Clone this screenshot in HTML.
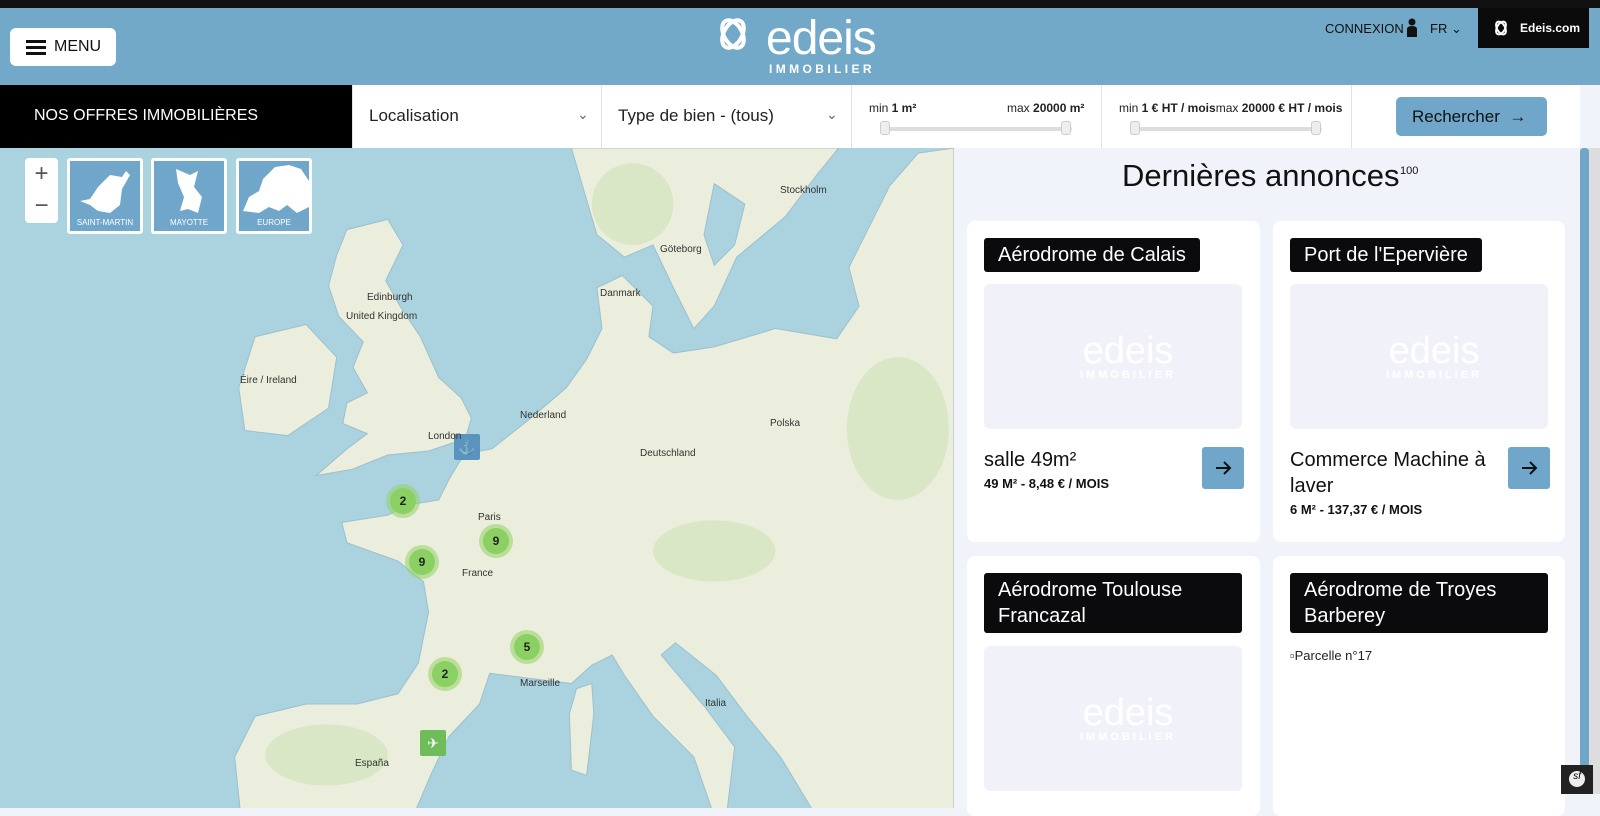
<!DOCTYPE html>
<html><head><meta charset="utf-8"><style>
*{box-sizing:border-box;margin:0;padding:0}
body{width:1600px;height:794px;overflow:hidden;font-family:"Liberation Sans",sans-serif;background:#f1f3fa;position:relative}
.abs{position:absolute}
#top{left:0;top:0;width:1600px;height:8px;background:#111}
#hdr{left:0;top:8px;width:1600px;height:77px;background:#72a8c8}
#menu{left:10px;top:28px;width:106px;height:38px;background:#fff;border-radius:6px;font-size:16px;display:flex;align-items:center;padding-left:16px;gap:8px;color:#111}
#bar{left:0;top:85px;width:1580px;height:63px;background:#fff}
.col{position:absolute;top:0;height:63px;border-left:1px solid #e3e3e3}
.lbl{font-size:17px;color:#222;position:absolute;top:21px}
.sl{position:absolute;top:42px;height:4px;background:#ddd;border-radius:2px}
.kn{position:absolute;top:36px;width:10px;height:14px;border:1px solid #ccc;border-radius:3px;background:#eee}
.small{font-size:12px;color:#222;position:absolute;top:16px}
#map{left:0;top:148px;width:954px;height:660px;overflow:hidden;background:#aad3df}
.cl{position:absolute;width:34px;height:34px;border-radius:50%;background:rgba(150,210,100,.55);display:flex;align-items:center;justify-content:center}
.cl b{width:26px;height:26px;border-radius:50%;background:#8bd063;font-size:12px;display:flex;align-items:center;justify-content:center;color:#222}
.ml{position:absolute;font-size:10px;color:#333}
.card{position:absolute;background:#fff;border-radius:8px}
.tag{position:absolute;left:17px;top:17px;background:#0b0b0d;color:#fff;font-size:20px;padding:4px 14px;border-radius:3px;line-height:26px}
.ph{position:absolute;left:17px;top:63px;width:258px;height:145px;background:#f1f2f9;border-radius:6px;display:flex;flex-direction:column;align-items:center;justify-content:center;color:#fff;padding-left:30px}
.ph .e{font-size:38px;line-height:36px}
.ph .i{font-size:11px;letter-spacing:3px;font-weight:bold}
.arr{position:absolute;left:235px;top:226px;width:42px;height:42px;background:#6fa6c9;border-radius:3px}
.t{position:absolute;left:17px;top:226px;font-size:20px;color:#111;width:210px;line-height:26px}
.s{font-size:13px;font-weight:bold;margin-top:2px;line-height:18px}
.sq{position:absolute;top:10px;width:76px;height:76px;background:#6fa6c9;border:3px solid #fff;border-radius:3px;color:#fff;font-size:8px;text-align:center;overflow:hidden}
.sq span{position:absolute;bottom:4px;left:0;right:0}
</style></head><body>
<div id="top" class="abs"></div>
<div id="hdr" class="abs">
 <div id="menu" class="abs" style="top:20px"><svg width="20" height="16"><rect y="1" width="20" height="3" fill="#111"/><rect y="7" width="20" height="3" fill="#111"/><rect y="13" width="20" height="3" fill="#111"/></svg>MENU</div>
 <svg class="abs" style="left:712px;top:9px" width="42" height="34" viewBox="0 0 42 34"><g fill="none" stroke="#fff" stroke-width="4"><ellipse cx="21" cy="17" rx="15" ry="9" transform="rotate(60 21 17)"/><ellipse cx="21" cy="17" rx="15" ry="9" transform="rotate(-60 21 17)"/></g></svg>
 <div class="abs" style="left:766px;top:6px;color:#fff;font-size:48px;line-height:50px;letter-spacing:-1px">edeis</div>
 <div class="abs" style="left:769px;top:54px;color:#fff;font-size:12px;letter-spacing:3.4px;font-weight:bold">IMMOBILIER</div>
 <div class="abs" style="left:1325px;top:13px;color:#111;font-size:13px">CONNEXION</div>
 <svg class="abs" style="left:1406px;top:10px" width="12" height="20"><circle cx="6" cy="4" r="3.5" fill="#111"/><path d="M1 19V11Q1 8 6 8Q11 8 11 11V19Z" fill="#111"/></svg>
 <div class="abs" style="left:1430px;top:13px;color:#111;font-size:13px">FR &#8964;</div>
 <div class="abs" style="left:1478px;top:0;width:111px;height:40px;background:#0b0b0b;color:#fff;font-size:12px;font-weight:bold;padding:13px 0 0 42px">Edeis.com
  <svg class="abs" style="left:14px;top:11px" width="18" height="18"><g fill="none" stroke="#fff" stroke-width="2"><ellipse cx="9" cy="9" rx="7" ry="4" transform="rotate(60 9 9)"/><ellipse cx="9" cy="9" rx="7" ry="4" transform="rotate(-60 9 9)"/></g></svg></div>
</div>
<div id="bar" class="abs">
 <div class="abs" style="left:0;top:0;width:352px;height:63px;background:#000;color:#fff;font-size:16px;padding:22px 0 0 34px">NOS OFFRES IMMOBILIÈRES</div>
 <div class="col" style="left:352px;width:249px"><span class="lbl" style="left:16px">Localisation</span><span class="lbl" style="left:224px;font-size:14px;color:#666">&#8964;</span></div>
 <div class="col" style="left:601px;width:250px"><span class="lbl" style="left:16px">Type de bien - (tous)</span><span class="lbl" style="left:224px;font-size:14px;color:#666">&#8964;</span></div>
 <div class="col" style="left:851px;width:250px"><span class="small" style="left:17px">min <b>1 m²</b></span><span class="small" style="left:155px">max <b>20000 m²</b></span><div class="sl" style="left:30px;width:190px"></div><div class="kn" style="left:28px"></div><div class="kn" style="left:209px"></div></div>
 <div class="col" style="left:1101px;width:250px"><span class="small" style="left:17px">min <b>1 € HT / mois</b>max <b>20000 € HT / mois</b></span><div class="sl" style="left:30px;width:190px"></div><div class="kn" style="left:28px"></div><div class="kn" style="left:209px"></div></div>
 <div class="col" style="left:1351px;width:229px"><div class="abs" style="left:44px;top:12px;width:151px;height:39px;background:#6fa6c9;border-radius:5px;font-size:17px;color:#111;padding:10px 0 0 16px">Rechercher &nbsp;&rarr;</div></div>
</div>
<div id="map" class="abs">
<svg width="954" height="660" viewBox="0 145 935 647" preserveAspectRatio="none" style="position:absolute;left:0;top:0">
<g fill="#eceedd" stroke="#9cc0cf" stroke-width="1">
<path d="M340 225L380 215L395 240L378 275L392 300L412 330L430 370L452 390L462 410L456 430L420 442L380 446L345 460L310 466L340 440L360 425L336 415L340 395L360 385L346 360L356 335L332 310L322 280L330 250Z"/>
<path d="M250 330L300 318L330 350L322 400L282 427L240 422L234 380Z"/>
<path d="M455 445L482 440L520 410L555 380L575 352L590 322L585 282L610 270L640 300L636 330L660 346L700 340L760 322L820 332L842 300L832 262L852 222L872 182L900 150L935 145L935 800L800 800L765 742L732 702L702 662L662 630L648 642L690 692L720 732L712 800L700 800L680 742L640 702L612 662L600 642L580 652L560 670L520 665L480 660L470 690L440 722L422 760L405 800L236 800L230 742L250 702L300 690L350 690L390 680L410 650L420 600L415 570L390 550L340 532L335 512L380 505L400 495L430 490L440 470Z"/>
<path d="M560 145L585 230L612 252L640 240L660 282L680 322L700 300L722 252L770 212L800 172L822 145Z"/>
<path d="M565 675L580 670L582 700L575 760L560 755L558 700Z"/>
<path d="M700 180L730 200L720 240L700 260L690 230Z" fill="#aad3df"/>
</g>
<g fill="#c8e0b0" opacity=".5"><ellipse cx="620" cy="200" rx="40" ry="40"/><ellipse cx="880" cy="420" rx="50" ry="70"/><ellipse cx="700" cy="540" rx="60" ry="30"/><ellipse cx="320" cy="740" rx="60" ry="30"/></g>
</svg>
<div class="abs" style="left:25px;top:10px;width:33px;height:65px;background:#fff;border-radius:4px;font-size:24px;color:#555;text-align:center;line-height:32px">+<br>−</div>
<div class="sq" style="left:67px"><svg width="70" height="60"><path d="M10 40L20 38L28 26L40 14L52 16L56 10L60 14L52 28L50 44L40 52L28 50L20 44Z" fill="#fff"/></svg><span>SAINT-MARTIN</span></div>
<div class="sq" style="left:151px"><svg width="70" height="60"><path d="M22 8L36 14L44 10L40 26L48 36L44 52L34 48L26 50L30 36L24 22Z" fill="#fff"/></svg><span>MAYOTTE</span></div>
<div class="sq" style="left:236px"><svg width="70" height="60"><path d="M4 50L10 36L20 30L24 18L36 6L50 4L62 8L70 20L70 46L58 52L48 44L40 50L30 46L20 52Z" fill="#fff"/></svg><span>EUROPE</span></div>
<div class="abs" style="left:454px;top:286px;width:26px;height:26px;background:#5b93bf;color:#fff;font-size:14px;text-align:center;line-height:26px;border-radius:2px">⚓</div>
<div class="abs" style="left:420px;top:582px;width:26px;height:26px;background:#6ebc5a;color:#fff;font-size:14px;text-align:center;line-height:26px;border-radius:2px">✈</div>
<div class="cl" style="left:386px;top:336px"><b>2</b></div>
<div class="cl" style="left:479px;top:376px"><b>9</b></div>
<div class="cl" style="left:405px;top:397px"><b>9</b></div>
<div class="cl" style="left:510px;top:482px"><b>5</b></div>
<div class="cl" style="left:428px;top:509px"><b>2</b></div>
<span class="ml" style="left:367px;top:144px">Edinburgh</span><span class="ml" style="left:346px;top:163px">United Kingdom</span><span class="ml" style="left:240px;top:227px">Éire / Ireland</span><span class="ml" style="left:428px;top:283px">London</span><span class="ml" style="left:478px;top:364px">Paris</span><span class="ml" style="left:462px;top:420px">France</span><span class="ml" style="left:520px;top:262px">Nederland</span><span class="ml" style="left:600px;top:140px">Danmark</span><span class="ml" style="left:640px;top:300px">Deutschland</span><span class="ml" style="left:770px;top:270px">Polska</span><span class="ml" style="left:705px;top:550px">Italia</span><span class="ml" style="left:355px;top:610px">España</span><span class="ml" style="left:520px;top:530px">Marseille</span><span class="ml" style="left:660px;top:96px">Göteborg</span><span class="ml" style="left:780px;top:37px">Stockholm</span>
</div>
<div class="abs" style="left:1122px;top:158px;font-size:31px;color:#111">Dernières annonces</div>
<div class="abs" style="left:1400px;top:165px;font-size:11px;color:#111">100</div>
<div class="card" style="left:967px;top:221px;width:293px;height:321px"><div class="tag">Aérodrome de Calais</div><div class="ph"><div class="e">edeis</div><div class="i">IMMOBILIER</div></div><div class="t">salle 49m²<div class="s">49 M² - 8,48 € / MOIS</div></div><div class="arr"><svg width="42" height="42"><path d="M14 21H28M22 15L28 21L22 27" stroke="#111" stroke-width="2" fill="none"/></svg></div></div>
<div class="card" style="left:1273px;top:221px;width:292px;height:321px"><div class="tag">Port de l'Epervière</div><div class="ph"><div class="e">edeis</div><div class="i">IMMOBILIER</div></div><div class="t">Commerce Machine à laver<div class="s">6 M² - 137,37 € / MOIS</div></div><div class="arr"><svg width="42" height="42"><path d="M14 21H28M22 15L28 21L22 27" stroke="#111" stroke-width="2" fill="none"/></svg></div></div>
<div class="card" style="left:967px;top:556px;width:293px;height:260px"><div class="tag" style="width:258px">Aérodrome Toulouse Francazal</div><div class="ph" style="top:90px"><div class="e">edeis</div><div class="i">IMMOBILIER</div></div></div>
<div class="card" style="left:1273px;top:556px;width:292px;height:260px"><div class="tag" style="width:258px">Aérodrome de Troyes Barberey</div><div class="abs" style="left:17px;top:92px;font-size:13px;color:#222">▫Parcelle n°17</div></div>
<div class="abs" style="left:1580px;top:148px;width:20px;height:646px;background:#ddd"></div>
<div class="abs" style="left:1580px;top:148px;width:9px;height:646px;background:#6fa6c9;border-radius:4px"></div>
<div class="abs" style="left:1561px;top:765px;width:32px;height:29px;background:#222"><div style="margin:6px 0 0 8px;width:16px;height:16px;border-radius:50%;background:#eee;font-size:10px;font-style:italic;text-align:center">sf</div></div>
</body></html>
